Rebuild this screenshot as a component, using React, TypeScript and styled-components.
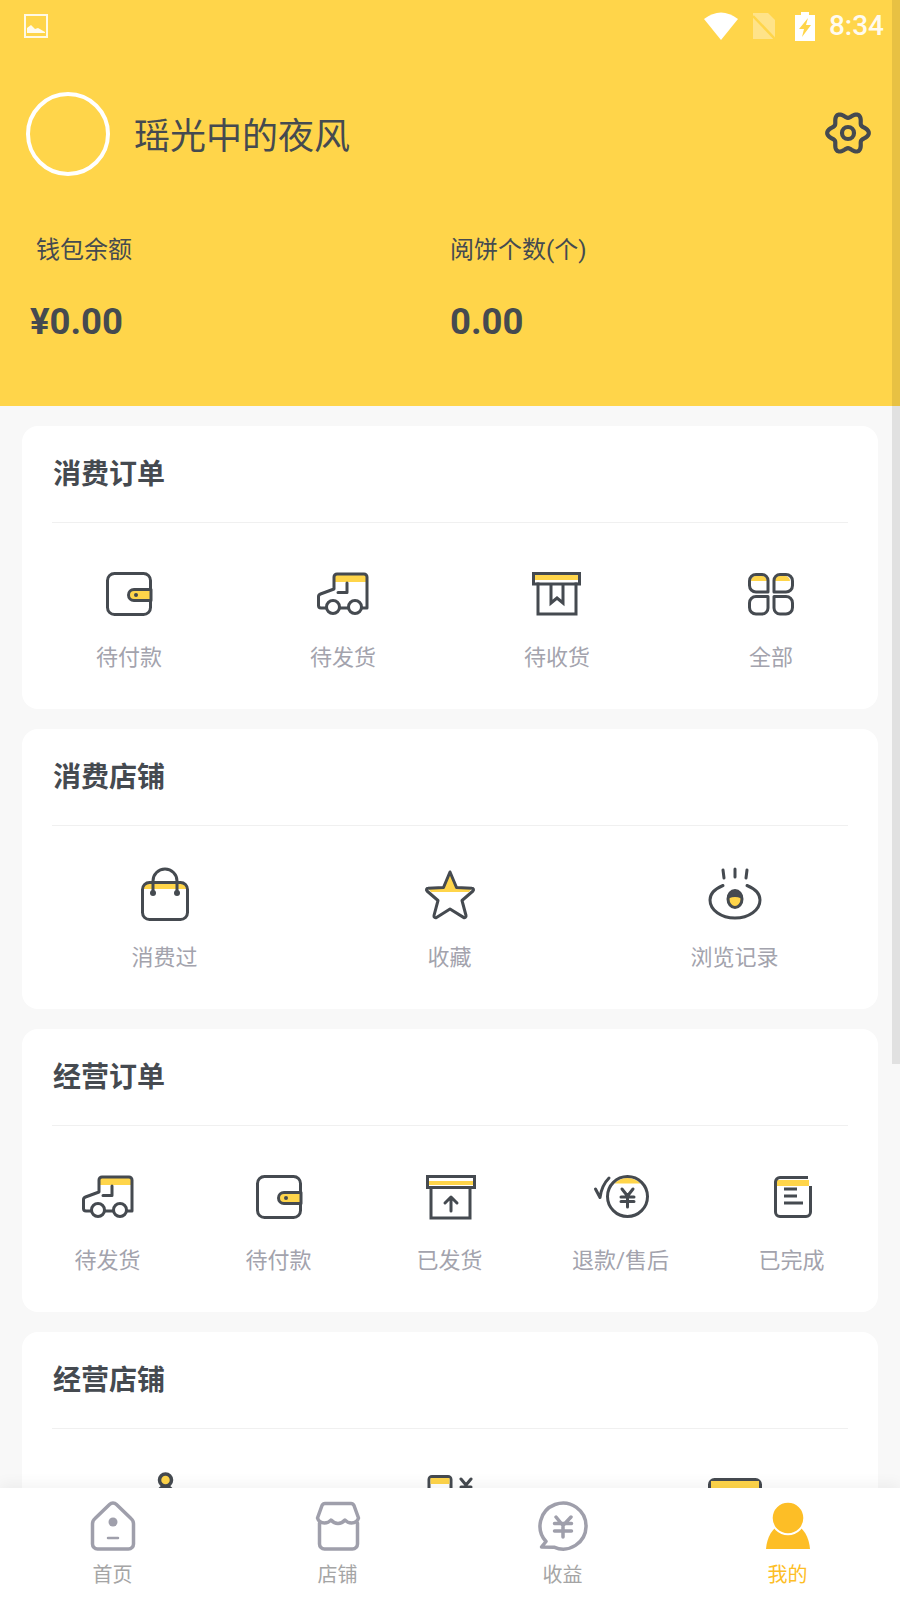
import React from 'react';
import styled, { createGlobalStyle } from 'styled-components';

const INK = '#454a50';
const SUN = '#ffd54a';
const MUTE = '#9f9fab';

const GlobalStyle = createGlobalStyle`
  html, body {
    margin: 0;
    padding: 0;
    background: #f8f8f8;
  }
  * {
    box-sizing: border-box;
  }
`;

const Page = styled.div`
  position: relative;
  width: 900px;
  height: 1600px;
  overflow: hidden;
  display: flex;
  flex-direction: column;
  font-family: "Roboto", "Noto Sans CJK SC", sans-serif;
  background: #f8f8f8;
`;

const Scroller = styled.main`
  flex: 1;
  min-height: 0;
  overflow: hidden;
`;

const Hero = styled.header`
  height: 406px;
  background: ${SUN};
  color: ${INK};
`;

const StatusBar = styled.div`
  height: 52px;
  padding: 0 16px 0 24px;
  display: flex;
  align-items: center;
  color: #fff;
  svg {
    display: block;
  }
`;

const StatusRight = styled.div`
  margin-left: auto;
  display: flex;
  align-items: center;
`;

const StatusGlyph = styled.svg<{ $gap: number }>`
  margin-left: ${(p) => p.$gap}px;
`;

const Clock = styled.span`
  margin-left: 14px;
  font-size: 28px;
  font-weight: 500;
  line-height: 32px;
  opacity: .92;
`;

const Profile = styled.div`
  height: 84px;
  margin-top: 40px;
  padding: 0 27px 0 26px;
  display: flex;
  align-items: center;
`;

const Avatar = styled.div`
  width: 84px;
  height: 84px;
  border: 4px solid #fff;
  border-radius: 50%;
`;

const UserName = styled.div`
  margin-left: 24px;
  font-size: 36px;
  line-height: 44px;
  margin-top: 5px;
`;

const Settings = styled.div`
  margin-left: auto;
  margin-bottom: 2px;
  svg {
    display: block;
  }
`;

const Stats = styled.div`
  margin-top: 58px;
  display: grid;
  grid-template-columns: 450px 1fr;
`;

const Stat = styled.div<{ $first?: boolean }>`
  padding-left: ${(p) => (p.$first ? '30px' : '0')};
`;

const StatLabel = styled.div<{ $inset?: boolean }>`
  font-size: 24px;
  line-height: 32px;
  margin-left: ${(p) => (p.$inset ? '6px' : '0')};
`;

const StatValue = styled.div`
  margin-top: 36px;
  font-size: 36.5px;
  line-height: 40px;
  font-weight: 700;
`;

const Cards = styled.div`
  padding: 20px 22px 0;
  display: flex;
  flex-direction: column;
  gap: 20px;
`;

const Card = styled.section`
  background: #fff;
  border-radius: 16px;
`;

const CardTitle = styled.h2`
  margin: 0 30px;
  height: 97px;
  padding: 0 0 4px 1px;
  display: flex;
  align-items: center;
  border-bottom: 1px solid #f0f0f0;
  font-size: 28px;
  font-weight: 700;
  color: ${INK};
`;

const Actions = styled.div<{ $cols: number; $nudge?: boolean }>`
  display: grid;
  grid-template-columns: repeat(${(p) => p.$cols}, 1fr);
  padding: 41px ${(p) => (p.$nudge ? '1px' : '0')} 36px 0;
`;

const Action = styled.div`
  display: flex;
  flex-direction: column;
  align-items: center;
  svg {
    display: block;
  }
`;

const ActionLabel = styled.span<{ $gap: number }>`
  margin-top: ${(p) => p.$gap}px;
  font-size: 22px;
  line-height: 30px;
  color: #a3a3ad;
`;

const TabBar = styled.nav`
  position: relative;
  flex: none;
  height: 112px;
  background: #fff;
  display: grid;
  grid-template-columns: repeat(4, 1fr);
  box-shadow: 0 -4px 14px rgba(0, 0, 0, .05);
`;

const Tab = styled.div<{ $active?: boolean }>`
  padding-top: 9px;
  display: flex;
  flex-direction: column;
  align-items: center;
  color: ${(p) => (p.$active ? '#fdbe26' : '#a5a5a5')};
  svg {
    display: block;
  }
`;

const TabLabel = styled.span`
  margin-top: 4px;
  font-size: 20px;
  line-height: 28px;
`;

const ScrollThumb = styled.div`
  position: absolute;
  top: 0;
  right: 0;
  width: 8px;
  height: 1064px;
  background: rgba(0, 0, 0, .09);
`;

// six soft lobes around the centre of the settings cog
const cogPath = Array.from({ length: 120 }, (_, i) => {
  const a = (i / 120) * Math.PI * 2;
  const r = 18 + 2.8 * Math.cos(6 * a);
  return `${i ? 'L' : 'M'}${(25 + r * Math.cos(a)).toFixed(2)} ${(25 + r * Math.sin(a)).toFixed(2)}`;
}).join('') + 'Z';

const Art = ({ children }: { children: React.ReactNode }) => (
  <svg
    width="60"
    height="60"
    viewBox="0 0 60 60"
    fill="none"
    stroke={INK}
    strokeWidth="3"
    strokeLinecap="round"
    strokeLinejoin="round"
  >
    {children}
  </svg>
);

const Wallet = () => (
  <Art>
    <rect x="8.5" y="9.5" width="43" height="41" rx="7" />
    <path d="M52 25.5H35a5.5 5.5 0 0 0 0 11h17z" fill={SUN} />
    <circle cx="37" cy="31" r="2" fill={INK} stroke="none" />
  </Art>
);

const Truck = () => (
  <Art>
    <rect x="22" y="11" width="31" height="7" fill={SUN} stroke="none" />
    <path d="M13 44H8a2.5 2.5 0 0 1-2.5-2.5V33a3 3 0 0 1 2-3L21 25V13a3 3 0 0 1 3-3h27a3 3 0 0 1 3 3v31h-5" />
    <path d="M26.5 44h9" />
    <path d="M34 19v9.5H25" />
    <circle cx="20" cy="43" r="6.5" />
    <circle cx="42" cy="43" r="6.5" />
  </Art>
);

const Crate = () => (
  <Art>
    <path d="M11 20v30h38V20" strokeLinecap="square" strokeLinejoin="miter" />
    <rect x="6.5" y="9.5" width="46" height="10.5" strokeLinejoin="miter" />
    <rect x="8" y="11" width="43" height="5" fill={SUN} stroke="none" />
    <path d="M24 21v18l6-5 6 5V21" strokeLinecap="butt" strokeLinejoin="miter" />
  </Art>
);

const Grid = () => (
  <Art>
    <path d="M10 17a5 5 0 0 1 5-5h6a5 5 0 0 1 5 5zM33 17a5 5 0 0 1 5-5h6a5 5 0 0 1 5 5z" fill={SUN} stroke="none" />
    <path d="M15 10.5h6a6 6 0 0 1 6 6V28H15a6.5 6.5 0 0 1-6.5-6.5V17a6.5 6.5 0 0 1 6.5-6.5z" />
    <path d="M45 10.5h-6a6 6 0 0 0-6 6V28h12a6.5 6.5 0 0 0 6.5-6.5V17a6.5 6.5 0 0 0-6.5-6.5z" />
    <path d="M15 50h6a6 6 0 0 0 6-6V32.5H15A6.5 6.5 0 0 0 8.5 39v4.5A6.5 6.5 0 0 0 15 50z" />
    <path d="M45 50h-6a6 6 0 0 1-6-6V32.5h12a6.5 6.5 0 0 1 6.5 6.5v4.5A6.5 6.5 0 0 1 45 50z" />
  </Art>
);

const Bag = () => (
  <Art>
    <rect x="9" y="17" width="42" height="5" fill={SUN} stroke="none" />
    <rect x="7.5" y="15.5" width="45" height="37" rx="7" />
    <path d="M18 26V14a12 12 0 0 1 24 0v12" />
    <circle cx="18" cy="26" r="3" fill={INK} stroke="none" />
    <circle cx="42" cy="26" r="3" fill={INK} stroke="none" />
  </Art>
);

const Star = () => (
  <Art>
    <path d="M30 5l-6.5 15.5L8 21l3 4h38l3-4-15.5-.5z" fill={SUN} stroke="none" />
    <path d="M30 5l6.5 15.500 15.500.7c1.500 0 2 1.800 1 2.800L42 33.500l4 15c.4 1.600-1.200 2.700-2.500 1.900L30 42l-13.500 8.400c-1.300.8-2.900-.3-2.500-1.900l4-15L7 24c-1-1-.5-2.800 1-2.800l15.500-.7z" />
  </Art>
);

const Eye = () => (
  <Art>
    <path d="M18 3l1 8M30 2v8M42 3l-1 8" />
    <path d="M18 18.5C9.5 22 5 27 5 33c0 10 11 18 25 18s25-8 25-18c0-6-4.5-11-13-14.5" />
    <ellipse cx="30" cy="32" rx="7" ry="8.5" fill={SUN} />
    <path d="M23.5 30a7 7 0 0 1 13 0q-6.500-3-13 0z" fill={INK} />
  </Art>
);

const CrateUp = () => (
  <Art>
    <path d="M11 21v30h39V21" strokeLinecap="square" strokeLinejoin="miter" />
    <rect x="7.5" y="9.5" width="47" height="11" strokeLinejoin="miter" />
    <rect x="9" y="14" width="44" height="4" fill={SUN} stroke="none" />
    <path d="M31 44V30M25 36l6-6 6 6" />
  </Art>
);

const Refund = () => (
  <Art>
    <path d="M23.3 16.5a18.5 18.5 0 0 1 26.4 0z" fill={SUN} stroke="none" />
    <circle cx="36.5" cy="29.5" r="20" />
    <path d="M4.5 22l4.500 8.500C10 23 13 16 18 11" />
    <path d="M31 22l5.500 7 5.500-7M30 30h13M30 34.500h13M36.500 29v11" />
  </Art>
);

const Ledger = () => (
  <Art>
    <rect x="15" y="13" width="32" height="6" fill={SUN} stroke="none" />
    <path d="M46 10.5H18a4.500 4.500 0 0 0-4.500 4.500v30a4.500 4.500 0 0 0 4.500 4.500h26a4.500 4.500 0 0 0 4.500-4.500V19" strokeLinecap="butt" />
    <path d="M22 22h13M22 29h13M22 36h19" strokeLinecap="butt" />
  </Art>
);

const Medal = () => (
  <Art>
    <circle cx="30.5" cy="10" r="6" fill={SUN} strokeWidth="3.5" />
    <path d="M24 21q1-4 4-4h5q3 0 4 4" />
  </Art>
);

const Parcel = () => (
  <Art>
    <rect x="9" y="6.5" width="22" height="30" rx="3" />
    <rect x="10.5" y="8" width="19" height="6" fill={SUN} stroke="none" />
    <path d="M41 9l5 6 5-6M46 15v10M41 17h10" />
  </Art>
);

const Voucher = () => (
  <Art>
    <rect x="4.5" y="9.5" width="51" height="30" rx="5" />
    <rect x="6" y="11" width="48" height="9" fill={SUN} stroke="none" />
  </Art>
);

const TabArt = ({ children }: { children: React.ReactNode }) => (
  <svg
    width="60"
    height="60"
    viewBox="0 0 60 60"
    fill="none"
    stroke={MUTE}
    strokeWidth="3.5"
    strokeLinecap="round"
    strokeLinejoin="round"
  >
    {children}
  </svg>
);

const HomeIcon = () => (
  <TabArt>
    <path d="M26.5 7.5a5 5 0 0 1 7 0L48 21.500a7 7 0 0 1 2.500 5.500v20a5 5 0 0 1-5 5h-31a5 5 0 0 1-5-5V27a7 7 0 0 1 2.500-5.500z" />
    <circle cx="30" cy="25" r="4.5" fill={MUTE} stroke="none" />
    <path d="M25 41h10" strokeWidth="2.5" />
  </TabArt>
);

const StoreIcon = () => (
  <TabArt>
    <path d="M9.5 21Q11 26 16.500 26q4 0 6.500-3 3 3.500 7 3.500t7-3.500q2.500 3 6.500 3 5.500 0 7-5L46 8.500q-1-2-3-2H17q-2 0-3 2z" />
    <path d="M11.5 26v21a5 5 0 0 0 5 5h28a5 5 0 0 0 5-5V26" />
  </TabArt>
);

const IncomeIcon = () => (
  <TabArt>
    <path d="M13 44.5A23 23 0 1 1 21 50.2L8.500 50z" />
    <path d="M23 20l7 8.500 8-8.500M21.500 26.500h17M21.500 34h17M30 28v12" />
  </TabArt>
);

const MineIcon = () => (
  <svg width="60" height="60" viewBox="0 0 60 60">
    <path d="M8 52C9 38 17 26 30 26s21 12 22 26z" fill="#fdbe26" />
    <circle cx="30" cy="21" r="16.3" fill="#fdbe26" stroke="#fff" strokeWidth="2" />
  </svg>
);

const actionRow = (items: [React.ReactNode, string][], gap: number) =>
  items.map(([icon, label]) => (
    <Action key={label}>
      {icon}
      <ActionLabel $gap={gap}>{label}</ActionLabel>
    </Action>
  ));

const App: React.FC = () => {
  return (
    <Page>
      <GlobalStyle />
      <Scroller>
        <Hero>
          <StatusBar>
            <svg width="24" height="24" viewBox="0 0 24 24" fill="none">
              <rect x="1" y="1" width="22" height="22" stroke="#fff" strokeOpacity=".85" strokeWidth="2" />
              <path d="M3 19v-5l4-3 4 4 3-1 7 4v1z" fill="#fff" fillOpacity=".9" />
            </svg>
            <StatusRight>
              <svg width="34" height="28" viewBox="0 0 34 28">
                <path d="M0 7Q17-6 34 7L17 28z" fill="#fff" />
              </svg>
              <StatusGlyph $gap={15} width="22" height="26" viewBox="0 0 22 26">
                <path d="M0 0h15l7 7v19H0z" fill="#fff" fillOpacity=".35" />
                <path d="M0 3l22 23" stroke={SUN} strokeWidth="2.5" />
              </StatusGlyph>
              <StatusGlyph $gap={20} width="20" height="29" viewBox="0 0 20 29">
                <path d="M6 0h8v3h6v26H0V3h6z" fill="#fff" />
                <path d="M13 6L4 17h5l-2 8 9-12h-5z" fill={SUN} />
              </StatusGlyph>
              <Clock>8:34</Clock>
            </StatusRight>
          </StatusBar>
          <Profile>
            <Avatar />
            <UserName>瑶光中的夜风</UserName>
            <Settings>
              <svg width="50" height="50" viewBox="0 0 50 50" fill="none" stroke={INK} strokeWidth="4.2" strokeLinejoin="round">
                <path d={cogPath} />
                <circle cx="25" cy="25" r="6" />
              </svg>
            </Settings>
          </Profile>
          <Stats>
            <Stat $first>
              <StatLabel $inset>钱包余额</StatLabel>
              <StatValue>¥0.00</StatValue>
            </Stat>
            <Stat>
              <StatLabel>阅饼个数(个)</StatLabel>
              <StatValue>0.00</StatValue>
            </Stat>
          </Stats>
        </Hero>
        <Cards>
          <Card>
            <CardTitle>消费订单</CardTitle>
            <Actions $cols={4}>
              {actionRow(
                [
                  [<Wallet />, '待付款'],
                  [<Truck />, '待发货'],
                  [<Crate />, '待收货'],
                  [<Grid />, '全部'],
                ],
                19
              )}
            </Actions>
          </Card>
          <Card>
            <CardTitle>消费店铺</CardTitle>
            <Actions $cols={3} $nudge>
              {actionRow(
                [
                  [<Bag />, '消费过'],
                  [<Star />, '收藏'],
                  [<Eye />, '浏览记录'],
                ],
                16
              )}
            </Actions>
          </Card>
          <Card>
            <CardTitle>经营订单</CardTitle>
            <Actions $cols={5} $nudge>
              {actionRow(
                [
                  [<Truck />, '待发货'],
                  [<Wallet />, '待付款'],
                  [<CrateUp />, '已发货'],
                  [<Refund />, '退款/售后'],
                  [<Ledger />, '已完成'],
                ],
                19
              )}
            </Actions>
          </Card>
          <Card>
            <CardTitle>经营店铺</CardTitle>
            <Actions $cols={3} $nudge>
              <Action><Medal /></Action>
              <Action><Parcel /></Action>
              <Action><Voucher /></Action>
            </Actions>
          </Card>
        </Cards>
      </Scroller>
      <TabBar>
        <Tab>
          <HomeIcon />
          <TabLabel>首页</TabLabel>
        </Tab>
        <Tab>
          <StoreIcon />
          <TabLabel>店铺</TabLabel>
        </Tab>
        <Tab>
          <IncomeIcon />
          <TabLabel>收益</TabLabel>
        </Tab>
        <Tab $active>
          <MineIcon />
          <TabLabel>我的</TabLabel>
        </Tab>
      </TabBar>
      <ScrollThumb />
    </Page>
  );
};

export default App;
